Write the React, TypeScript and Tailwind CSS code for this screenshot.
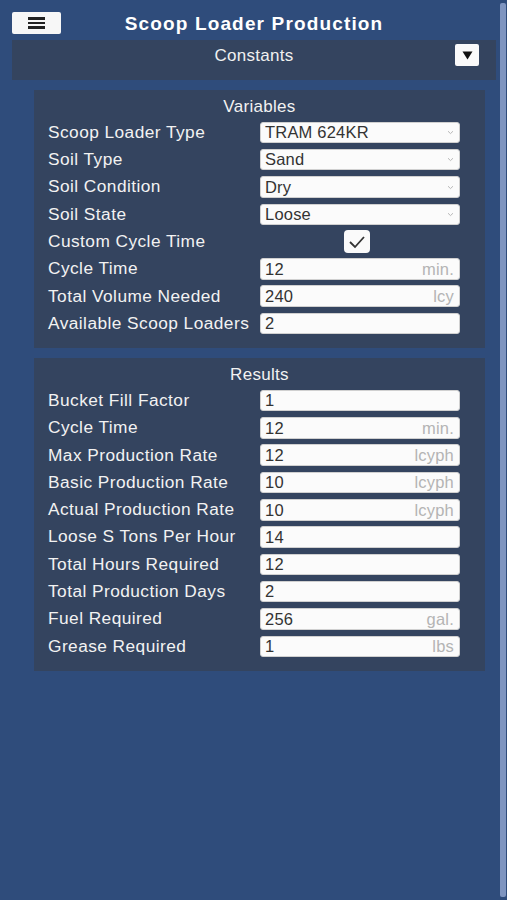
import React from "react";

const font = { fontFamily: '"Liberation Sans", Arial, sans-serif' };

function Chevron() {
  return (
    <svg width="7" height="5" viewBox="0 0 7 5" className="shrink-0">
      <path d="M1 1.2 L3.5 3.6 L6 1.2" fill="none" stroke="#b8b8b8" strokeWidth="1" />
    </svg>
  );
}

function Field({ value, unit, select }: { value: string; unit?: string; select?: boolean }) {
  return (
    <div className="w-[200px] h-[21.5px] bg-[#fbfbfb] rounded-[3px] border border-[#d0d0d0] flex items-center pl-[4px] pr-[5px]">
      <span className="flex-1 text-[16.5px] leading-none text-[#333333] tracking-[0.2px]">{value}</span>
      {unit && <span className="text-[16.5px] leading-none text-[#b4b4b4] tracking-[0.2px]">{unit}</span>}
      {select && <Chevron />}
    </div>
  );
}

function Row({ label, children }: { label: string; children: React.ReactNode }) {
  return (
    <div className="flex items-center h-[21.5px]">
      <div className="w-[212px] text-[17.3px] leading-none text-[#f2f2f2] tracking-[0.45px] whitespace-nowrap">{label}</div>
      {children}
    </div>
  );
}

function Panel({ title, children, className }: { title: string; children: React.ReactNode; className?: string }) {
  return (
    <div className={"mx-[34px] w-[451px] bg-[#34445f] pl-[14px] pt-[2px] " + (className || "")}>
      <div className="h-[29.7px] flex items-center justify-center text-[17px] text-[#f2f2f2] tracking-[0.3px] pr-[14px]">{title}</div>
      <div className="flex flex-col gap-[5.8px]">{children}</div>
    </div>
  );
}

export default function App() {
  return (
    <div style={font} className="relative w-[507px] h-[900px] bg-[#2f4c7b] overflow-hidden">
      {/* scrollbar */}
      <div className="absolute right-[1px] top-[3px] w-[6px] h-[894px] rounded-[2px] bg-[#7f95c0]" />

      <div className="pt-[12px] pl-[12px] pr-[11px]">
        <div className="relative h-[22px] flex items-center justify-center">
          <div className="absolute left-0 top-0 w-[49px] h-[22px] bg-[#f7f7f7] rounded-[2px] flex flex-col items-center justify-center gap-[2px]">
            <div className="w-[17px] h-[2.5px] bg-[#222]" />
            <div className="w-[17px] h-[2.5px] bg-[#222]" />
            <div className="w-[17px] h-[2.5px] bg-[#222]" />
          </div>
          <div className="text-[19px] font-bold text-white tracking-[1.15px] leading-none">Scoop Loader Production</div>
        </div>
        <div className="mt-[6px] h-[40px] bg-[#34445f] relative flex justify-center pt-[4px]">
          <div className="h-[22px] flex items-center text-[17px] text-[#f0f0f0] tracking-[0.3px] leading-none">Constants</div>
          <div className="absolute right-[17px] top-[4px] w-[24px] h-[22px] bg-[#fafafa] rounded-[2px] flex items-center justify-center">
            <svg width="11" height="9" viewBox="0 0 11 9">
              <path d="M0.5 0.5 H10.5 L5.5 8.5 Z" fill="#111" />
            </svg>
          </div>
        </div>
      </div>

      <Panel title="Variables" className="mt-[10px] pb-[13.4px]">
        <Row label="Scoop Loader Type"><Field value="TRAM 624KR" select /></Row>
        <Row label="Soil Type"><Field value="Sand" select /></Row>
        <Row label="Soil Condition"><Field value="Dry" select /></Row>
        <Row label="Soil State"><Field value="Loose" select /></Row>
        <Row label="Custom Cycle Time">
          <div className="w-[200px] flex justify-center pr-[6px]">
            <div className="w-[26px] h-[23px] bg-[#fafafa] rounded-[4px] flex items-center justify-center">
              <svg width="18" height="14" viewBox="0 0 18 14">
                <path d="M2 7 L7 12 L16 2" fill="none" stroke="#333" strokeWidth="1.8" />
              </svg>
            </div>
          </div>
        </Row>
        <Row label="Cycle Time"><Field value="12" unit="min." /></Row>
        <Row label="Total Volume Needed"><Field value="240" unit="lcy" /></Row>
        <Row label="Available Scoop Loaders"><Field value="2" /></Row>
      </Panel>

      <Panel title="Results" className="mt-[10.5px] pb-[14.4px]">
        <Row label="Bucket Fill Factor"><Field value="1" /></Row>
        <Row label="Cycle Time"><Field value="12" unit="min." /></Row>
        <Row label="Max Production Rate"><Field value="12" unit="lcyph" /></Row>
        <Row label="Basic Production Rate"><Field value="10" unit="lcyph" /></Row>
        <Row label="Actual Production Rate"><Field value="10" unit="lcyph" /></Row>
        <Row label="Loose S Tons Per Hour"><Field value="14" /></Row>
        <Row label="Total Hours Required"><Field value="12" /></Row>
        <Row label="Total Production Days"><Field value="2" /></Row>
        <Row label="Fuel Required"><Field value="256" unit="gal." /></Row>
        <Row label="Grease Required"><Field value="1" unit="lbs" /></Row>
      </Panel>
    </div>
  );
}
